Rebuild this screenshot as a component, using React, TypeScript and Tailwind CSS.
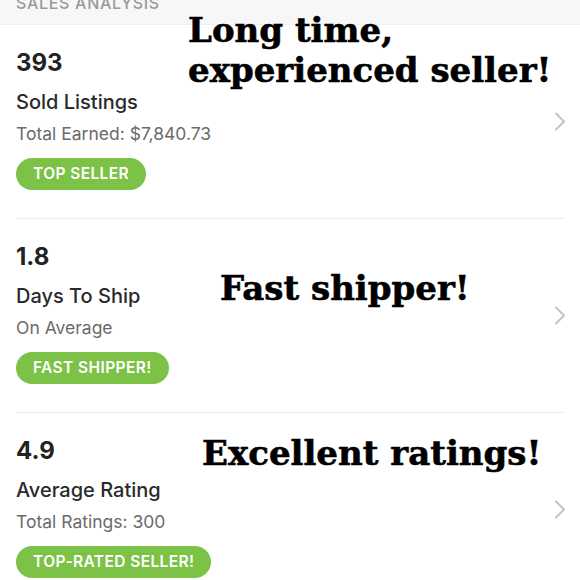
import React from 'react';

interface Stat {
  value: string;
  label: string;
  sub: string;
  badge: string;
}

const STATS: Stat[] = [
  { value: '393', label: 'Sold Listings', sub: 'Total Earned: $7,840.73', badge: 'TOP SELLER' },
  { value: '1.8', label: 'Days To Ship', sub: 'On Average', badge: 'FAST SHIPPER!' },
  { value: '4.9', label: 'Average Rating', sub: 'Total Ratings: 300', badge: 'TOP-RATED SELLER!' },
];

const Chevron = () => (
  <svg width="12" height="19" viewBox="0 0 12 19" fill="none" className="shrink-0">
    <path d="M2 1.5 L10 9.5 L2 17.5" stroke="#c4c4c4" strokeWidth="2" strokeLinecap="round" strokeLinejoin="round" />
  </svg>
);

const StatRow = ({ stat, last }: { stat: Stat; last: boolean }) => (
  <div className="pl-4">
    <div className="flex items-center pr-[14px]">
      <div className="flex flex-1 flex-col items-start pt-[24px] pb-[28px]">
        <div className="text-[24px] leading-[28px] font-bold text-[#222]">{stat.value}</div>
        <div className="mt-[13px] text-[20px] leading-[24px] font-medium text-[#2a2a2a]">{stat.label}</div>
        <div className="mt-[9px] text-[17.5px] leading-[22px] text-[#6b6b6b]">{stat.sub}</div>
        <div className="mt-[13px] inline-flex h-[32px] items-center rounded-full bg-[#7cc247] px-[17px] text-[15.5px] font-semibold tracking-[0.4px] text-white">
          {stat.badge}
        </div>
      </div>
      <Chevron />
    </div>
    {!last && <div className="mr-4 h-px bg-[#ececec]" />}
  </div>
);

export default function App() {
  return (
    <div className="relative h-[580px] w-[580px] overflow-hidden bg-white font-['Inter',sans-serif]">
      <div className="h-[25px] overflow-hidden border-b border-[#efefef] bg-[#f7f7f7] pl-4">
        <div className="-mt-[7px] text-[16px] leading-[20px] font-medium tracking-[0.7px] text-[#9a9a9a]">SALES ANALYSIS</div>
      </div>

      {STATS.map((s, i) => (
        <StatRow key={s.label} stat={s} last={i === STATS.length - 1} />
      ))}

      {/* Annotation overlays */}
      <div className="absolute left-[188px] top-[10px] whitespace-nowrap font-['DejaVu_Serif',serif] text-[34px] leading-[40px] font-bold text-black [-webkit-text-stroke:0.6px_black]">
        <div>Long time,</div>
        <div>experienced seller!</div>
      </div>
      <div className="absolute left-[220px] top-[268px] whitespace-nowrap font-['DejaVu_Serif',serif] text-[34px] leading-[40px] font-bold text-black [-webkit-text-stroke:0.6px_black]">
        Fast shipper!
      </div>
      <div className="absolute left-[202px] top-[433px] whitespace-nowrap font-['DejaVu_Serif',serif] text-[34px] leading-[40px] font-bold text-black [-webkit-text-stroke:0.6px_black]">
        Excellent ratings!
      </div>
    </div>
  );
}
